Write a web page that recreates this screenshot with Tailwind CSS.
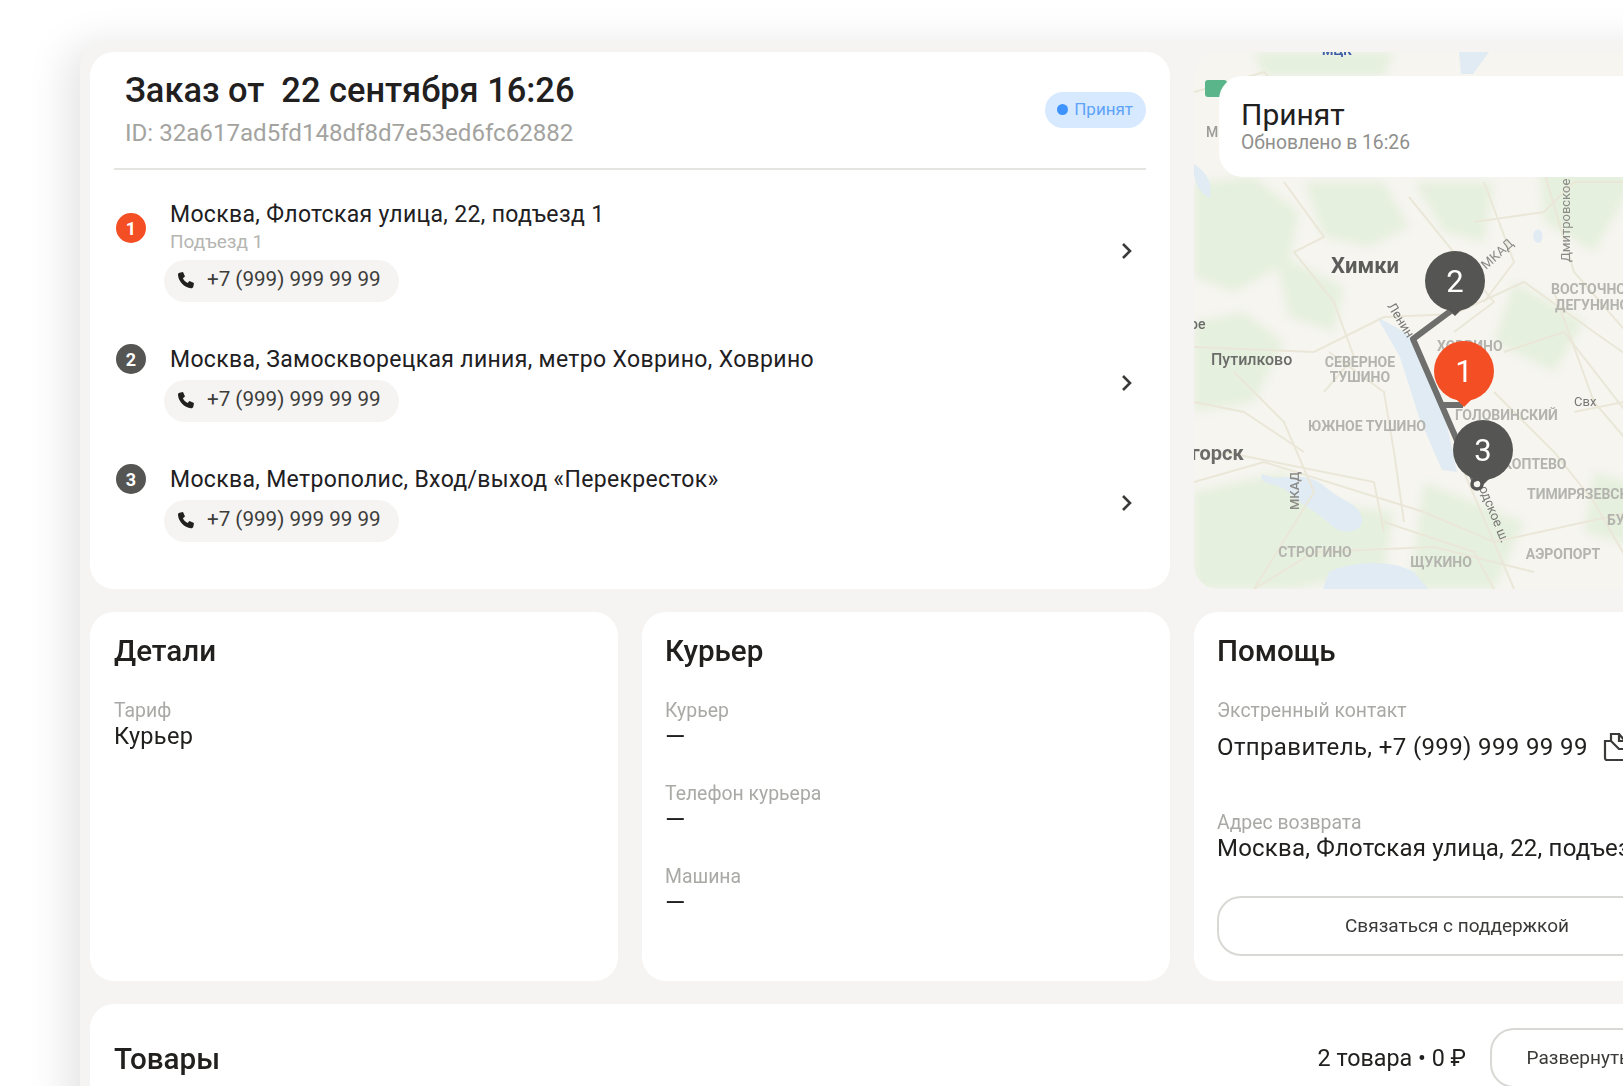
<!DOCTYPE html>
<html lang="ru">
<head>
  <meta charset="UTF-8">
  <title>Заказ</title>
  <script src="https://cdn.jsdelivr.net/npm/@tailwindcss/browser@4"></script>
</head>
<body class="bg-white">
<div class="w-[1623px] h-[1086px] overflow-hidden font-[family-name:Roboto,sans-serif] text-[#21201f] blur-[0.6px]">
  <div class="ml-[80px] mt-[40px] w-[1660px] h-[1100px] pl-[10px] pt-[12px] bg-[#f5f4f2] rounded-tl-[28px] shadow-[-14px_4px_40px_rgba(0,0,0,0.10)]">
    <div class="grid grid-cols-[528px_528px_528px] grid-rows-[537px_369px_300px] gap-x-[24px] gap-y-[23px]">

      <!-- order card -->
      <section class="col-span-2 bg-white rounded-[24px] px-[24px] pt-[16px]">
        <div class="flex items-center justify-between border-b-2 border-[#e5e4e0] pb-[20px] pl-[11px]">
          <div>
            <h1 class="text-[34.4px] leading-[44px] font-medium whitespace-pre">Заказ от  22 сентября 16:26</h1>
            <p class="mt-[6px] text-[24.100px] leading-[30px] text-[#a3a3a0]">ID: 32a617ad5fd148df8d7e53ed6fc62882</p>
          </div>
          <div class="flex items-center gap-[6px] h-[36px] pl-[12px] pr-[13px] mt-[3px] rounded-full bg-[#d6e9ff]">
            <span class="w-[11px] h-[11px] rounded-full bg-[#3f93ff]"></span>
            <span class="text-[17px] text-[#5fa3f7]">Принят</span>
          </div>
        </div>

        <div class="mt-[30px] flex flex-col gap-[43px] pr-[12px]">
          <div class="flex items-center justify-between">
            <div class="flex">
              <span class="mt-[13px] ml-[2px] mr-[24px] w-[30px] h-[30px] rounded-full bg-[#f44e24] text-white text-[18px] font-bold flex items-center justify-center">1</span>
              <div>
                <p class="text-[23px] tracking-[0.33px] leading-[30px]">Москва, Флотская улица, 22, подъезд 1</p>
                <p class="text-[19px] leading-[24px] text-[#b5b5b2]">Подъезд 1</p>
                <div class="-ml-[6px] mt-[6px] w-[235px] h-[42px] rounded-full bg-[#f5f4f2] flex items-center pl-[12px] gap-[11px]">
                  <svg class="w-[20px] h-[20px]" viewBox="0 0 20 20"><path d="M3.5 1.800 7 1l2 4.600-2.100 1.700c.9 2 2.500 3.700 4.700 4.800l1.800-2.100L18 12l-.7 3.700c-.2.9-1.200 1.600-2.200 1.500C8 16.400 2.600 10.500 2 4c-.1-1 .5-2 1.500-2.200Z" fill="#21201f"/></svg>
                  <span class="-mt-[4px] text-[20.600px] text-[#3d3d3b]">+7 (999) 999 99 99</span>
                </div>
              </div>
            </div>
            <svg class="w-[14px] h-[18px]" viewBox="0 0 14 18"><path d="M3 2l7 7-7 7" fill="none" stroke="#3a3a38" stroke-width="2.600"/></svg>
          </div>

          <div class="flex items-center justify-between">
            <div class="flex">
              <span class="-mt-[1px] ml-[2px] mr-[24px] w-[30px] h-[30px] rounded-full bg-[#555553] text-white text-[18px] font-bold flex items-center justify-center">2</span>
              <div>
                <p class="text-[23px] tracking-[0.33px] leading-[30px]">Москва, Замоскворецкая линия, метро Ховрино, Ховрино</p>
                <div class="-ml-[6px] mt-[5px] w-[235px] h-[42px] rounded-full bg-[#f5f4f2] flex items-center pl-[12px] gap-[11px]">
                  <svg class="w-[20px] h-[20px]" viewBox="0 0 20 20"><path d="M3.5 1.800 7 1l2 4.600-2.100 1.700c.9 2 2.500 3.700 4.700 4.800l1.800-2.100L18 12l-.7 3.700c-.2.9-1.200 1.600-2.200 1.500C8 16.400 2.600 10.500 2 4c-.1-1 .5-2 1.500-2.200Z" fill="#21201f"/></svg>
                  <span class="-mt-[4px] text-[20.600px] text-[#3d3d3b]">+7 (999) 999 99 99</span>
                </div>
              </div>
            </div>
            <svg class="w-[14px] h-[18px] -mt-[2px]" viewBox="0 0 14 18"><path d="M3 2l7 7-7 7" fill="none" stroke="#3a3a38" stroke-width="2.600"/></svg>
          </div>

          <div class="flex items-center justify-between">
            <div class="flex">
              <span class="-mt-[1px] ml-[2px] mr-[24px] w-[30px] h-[30px] rounded-full bg-[#555553] text-white text-[18px] font-bold flex items-center justify-center">3</span>
              <div>
                <p class="text-[23px] tracking-[0.33px] leading-[30px]">Москва, Метрополис, Вход/выход «Перекресток»</p>
                <div class="-ml-[6px] mt-[5px] w-[235px] h-[42px] rounded-full bg-[#f5f4f2] flex items-center pl-[12px] gap-[11px]">
                  <svg class="w-[20px] h-[20px]" viewBox="0 0 20 20"><path d="M3.5 1.800 7 1l2 4.600-2.100 1.700c.9 2 2.500 3.700 4.700 4.800l1.800-2.100L18 12l-.7 3.700c-.2.9-1.200 1.600-2.200 1.500C8 16.400 2.600 10.500 2 4c-.1-1 .5-2 1.500-2.200Z" fill="#21201f"/></svg>
                  <span class="-mt-[4px] text-[20.600px] text-[#3d3d3b]">+7 (999) 999 99 99</span>
                </div>
              </div>
            </div>
            <svg class="w-[14px] h-[18px] -mt-[2px]" viewBox="0 0 14 18"><path d="M3 2l7 7-7 7" fill="none" stroke="#3a3a38" stroke-width="2.600"/></svg>
          </div>
        </div>
      </section>

      <!-- map -->
      <section class="relative rounded-[24px] overflow-hidden bg-[#f6f5f0]">
        <svg class="absolute inset-0" width="528" height="537" viewBox="0 0 528 537" font-family="Roboto, sans-serif">
          <defs>
            <filter id="soft" x="-10%" y="-10%" width="120%" height="120%"><feGaussianBlur stdDeviation="5"/></filter>
          </defs>
          <!-- green areas -->
          <g fill="#e6f0de" filter="url(#soft)">
            <path d="M0 130 60 125 105 160 95 210 40 240 0 225Z"/>
            <path d="M110 130 190 130 215 175 175 195 130 185Z"/>
            <path d="M220 130 300 130 290 190 250 180Z"/>
            <path d="M0 270 50 260 90 290 60 350 0 360Z"/>
            <path d="M80 200 150 235 140 280 95 265Z"/>
            <path d="M0 440 90 420 130 450 200 460 190 520 100 537 0 537Z"/>
            <path d="M340 60 430 50 440 130 400 200 350 170Z"/>
            <path d="M320 230 390 270 360 320 300 290Z"/>
            <path d="M230 430 330 470 300 537 215 537Z"/>
            <path d="M60 0 200 0 190 24 70 24Z"/>
            <path d="M400 420 470 440 460 500 390 480Z"/>
          </g>
          <!-- water -->
          <g fill="#e0ebf4">
            <path d="M183 265 205 277 221 288 248 350 263 420 248 418 225 365 206 305Z"/>
            <path d="M68 422c20 10 40-6 62 12 18 16 34 16 38 32 3 14-18 18-30 8-14-14-30-20-44-34-10-10-30-6-26-18Z"/>
            <path d="M135 520c20-10 60-14 85 0l14 17h-105Z"/>
            <path d="M265 0h30l-16 22h-12Z"/>
            <path d="M0 112c8 5 20 16 16 34-10-4-18-16-16-34Z"/>
            <path d="M340 180c5-6 10 0 8 8-3 6-11 2-8-8Z"/>
          </g>
          <!-- roads -->
          <g fill="none" stroke="#ebe7d8" stroke-width="2">
            <path d="M0 40 70 20 110 60"/>
            <path d="M90 130 130 185 100 200 140 250 160 305 130 340"/>
            <path d="M0 295 120 300 190 265 260 262 330 230 400 280 528 370"/>
            <path d="M215 145 300 250 260 280"/>
            <path d="M290 130 320 210 290 250"/>
            <path d="M350 120 380 220 450 300 528 350"/>
            <path d="M280 170 350 160 380 130 528 130"/>
            <path d="M0 430 70 410 230 460 300 490 528 440"/>
            <path d="M30 400 180 430 190 480"/>
            <path d="M40 320 90 370 120 440 60 537"/>
            <path d="M0 350 50 360 110 400"/>
            <path d="M135 300 190 340 200 400 210 470"/>
            <path d="M300 340 360 400 400 450 450 537"/>
            <path d="M310 300 370 280 440 370 528 340"/>
            <path d="M380 360 528 330"/>
            <path d="M360 240 400 350 460 420"/>
            <path d="M270 420 320 537"/>
            <path d="M60 537 120 500 240 495 340 520"/>
            <path d="M190 470 280 500 300 537"/>
          </g>
          <!-- map labels -->
          <g text-anchor="middle" font-weight="700" font-size="14" fill="#b4b4af">
            <text x="166" y="315">СЕВЕРНОЕ</text>
            <text x="166" y="330">ТУШИНО</text>
            <text x="173" y="379">ЮЖНОЕ ТУШИНО</text>
            <text x="121" y="505">СТРОГИНО</text>
            <text x="247" y="515">ЩУКИНО</text>
            <text x="369" y="507">АЭРОПОРТ</text>
          </g>
          <g font-weight="700" font-size="14" fill="#b4b4af">
            <text x="243" y="299">ХОВРИНО</text>
            <text x="261" y="368">ГОЛОВИНСКИЙ</text>
            <text x="309" y="417">КОПТЕВО</text>
            <text x="333" y="447">ТИМИРЯЗЕВСКИЙ</text>
            <text x="413" y="473">БУТЫРСКИЙ</text>
            <text x="357" y="242">ВОСТОЧНОЕ</text>
            <text x="361" y="258">ДЕГУНИНО</text>
          </g>
          <text x="171" y="221" text-anchor="middle" font-weight="700" font-size="22" fill="#5c5c5a">Химки</text>
          <text x="17" y="313" font-weight="500" font-size="16" fill="#6b6b69">Путилково</text>
          <text x="-14" y="408" font-weight="700" font-size="20" fill="#6b6b69">огорск</text>
          <text x="-4" y="277" font-weight="500" font-size="14" fill="#6b6b69">ое</text>
          <text x="12" y="85" font-size="14" font-weight="500" fill="#9a9a96">М</text>
          <text x="128" y="3" font-size="13" font-weight="700" fill="#3f5fa8">МЦК</text>
          <rect x="11" y="28" width="22" height="17" rx="3" fill="#5bb58a"/>
          <text x="380" y="354" font-size="13" fill="#777775">Свх</text>
          <text transform="translate(376 210) rotate(-90)" font-size="13" fill="#8a8a87">Дмитровское</text>
          <text transform="translate(292 218) rotate(-42)" font-size="13" fill="#8a8a87">МКАД</text>
          <text transform="translate(105 458) rotate(-90)" font-size="13" font-weight="500" fill="#8a8a87">МКАД</text>
          <text transform="translate(193 254) rotate(58)" font-size="13" fill="#777775">Ленин</text>
          <text transform="translate(285 436) rotate(68)" font-size="13" fill="#777775">одское ш.</text>

          <!-- route -->
          <path d="M258 258 219 287 281 430M246 353H269" fill="none" stroke="#6e6e6c" stroke-width="6" stroke-linejoin="round"/>
          <circle cx="283" cy="432" r="5" fill="none" stroke="#555553" stroke-width="3.500"/>

          <!-- pins -->
          <path d="M253 256h16l-8 8Z" fill="#555553"/>
          <circle cx="261" cy="229" r="30" fill="#555553"/>
          <text x="261" y="240" text-anchor="middle" font-size="31" fill="#fff">2</text>
          <path d="M262 347h16l-8 8Z" fill="#f44e24"/>
          <circle cx="270" cy="319" r="30" fill="#f44e24"/>
          <text x="270" y="330" text-anchor="middle" font-size="31" fill="#fff">1</text>
          <path d="M281 425h16l-8 8Z" fill="#555553"/>
          <circle cx="289" cy="398" r="30" fill="#555553"/>
          <text x="289" y="409" text-anchor="middle" font-size="31" fill="#fff">3</text>
        </svg>
        <div class="absolute left-[25px] top-[24px] w-[478px] h-[101px] rounded-[24px] bg-white pl-[22px] pt-[22px]">
          <p class="text-[30px] leading-[34px]">Принят</p>
          <p class="text-[19.300px] leading-[22px] text-[#8f8f8c]">Обновлено в 16:26</p>
        </div>
      </section>

      <!-- details -->
      <section class="bg-white rounded-[24px] pl-[24px] pr-[24px] pt-[20px]">
        <h2 class="text-[29.600px] leading-[38px] font-medium">Детали</h2>
        <p class="mt-[28px] text-[19.400px] leading-[26px] text-[#a9a9a6]">Тариф</p>
        <p class="text-[23.500px] tracking-[0.3px] leading-[24px]">Курьер</p>
      </section>

      <!-- courier -->
      <section class="bg-white rounded-[24px] pl-[23px] pr-[24px] pt-[20px]">
        <h2 class="text-[29.600px] leading-[38px] font-medium">Курьер</h2>
        <p class="mt-[28px] text-[19.400px] leading-[26px] text-[#a9a9a6]">Курьер</p>
        <p class="text-[26px] leading-[24px]">—</p>
        <p class="mt-[33px] text-[19.400px] leading-[26px] text-[#a9a9a6]">Телефон курьера</p>
        <p class="text-[26px] leading-[24px]">—</p>
        <p class="mt-[33px] text-[19.400px] leading-[26px] text-[#a9a9a6]">Машина</p>
        <p class="text-[26px] leading-[24px]">—</p>
      </section>

      <!-- help -->
      <section class="bg-white rounded-[24px] pl-[23px] pr-[24px] pt-[20px]">
        <h2 class="text-[29.600px] leading-[38px] font-medium">Помощь</h2>
        <p class="mt-[28px] text-[19.400px] leading-[26px] text-[#a9a9a6]">Экстренный контакт</p>
        <div class="mt-[7px] flex items-center gap-[15px]">
          <p class="text-[24px] tracking-[0.37px] leading-[28px] whitespace-nowrap">Отправитель, +7 (999) 999 99 99</p>
          <svg class="shrink-0 w-[24px] h-[32px]" viewBox="0 0 24 32"><path d="M2 10h6V3h8v7h6v17a2 2 0 0 1-2 2H4a2 2 0 0 1-2-2ZM8 10l8 8h6M16 3l6 7" fill="none" stroke="#3a3a38" stroke-width="2.200"/></svg>
        </div>
        <p class="mt-[47px] text-[19.400px] leading-[26px] text-[#a9a9a6]">Адрес возврата</p>
        <p class="text-[24px] tracking-[0.2px] leading-[24px] whitespace-nowrap">Москва, Флотская улица, 22, подъезд 1</p>
        <button class="mt-[36px] w-[480px] h-[60px] rounded-[24px] border-2 border-[#d9d8d4] text-[19px] text-[#3a3a38]">Связаться с поддержкой</button>
      </section>

      <!-- goods -->
      <section class="col-span-3 bg-white rounded-[24px] pl-[24px] pr-[60px] pt-[24px] flex items-start justify-between">
        <h2 class="mt-[12px] text-[29.600px] leading-[38px] font-medium">Товары</h2>
        <div class="flex items-center gap-[24px]">
          <span class="text-[23.300px]">2 товара • 0 ₽</span>
          <button class="w-[172px] h-[60px] pl-[4px] rounded-[24px] border-2 border-[#d9d8d4] text-[19px] text-[#3a3a38]">Развернуть</button>
        </div>
      </section>
    </div>
  </div>
</div>
</body>
</html>
